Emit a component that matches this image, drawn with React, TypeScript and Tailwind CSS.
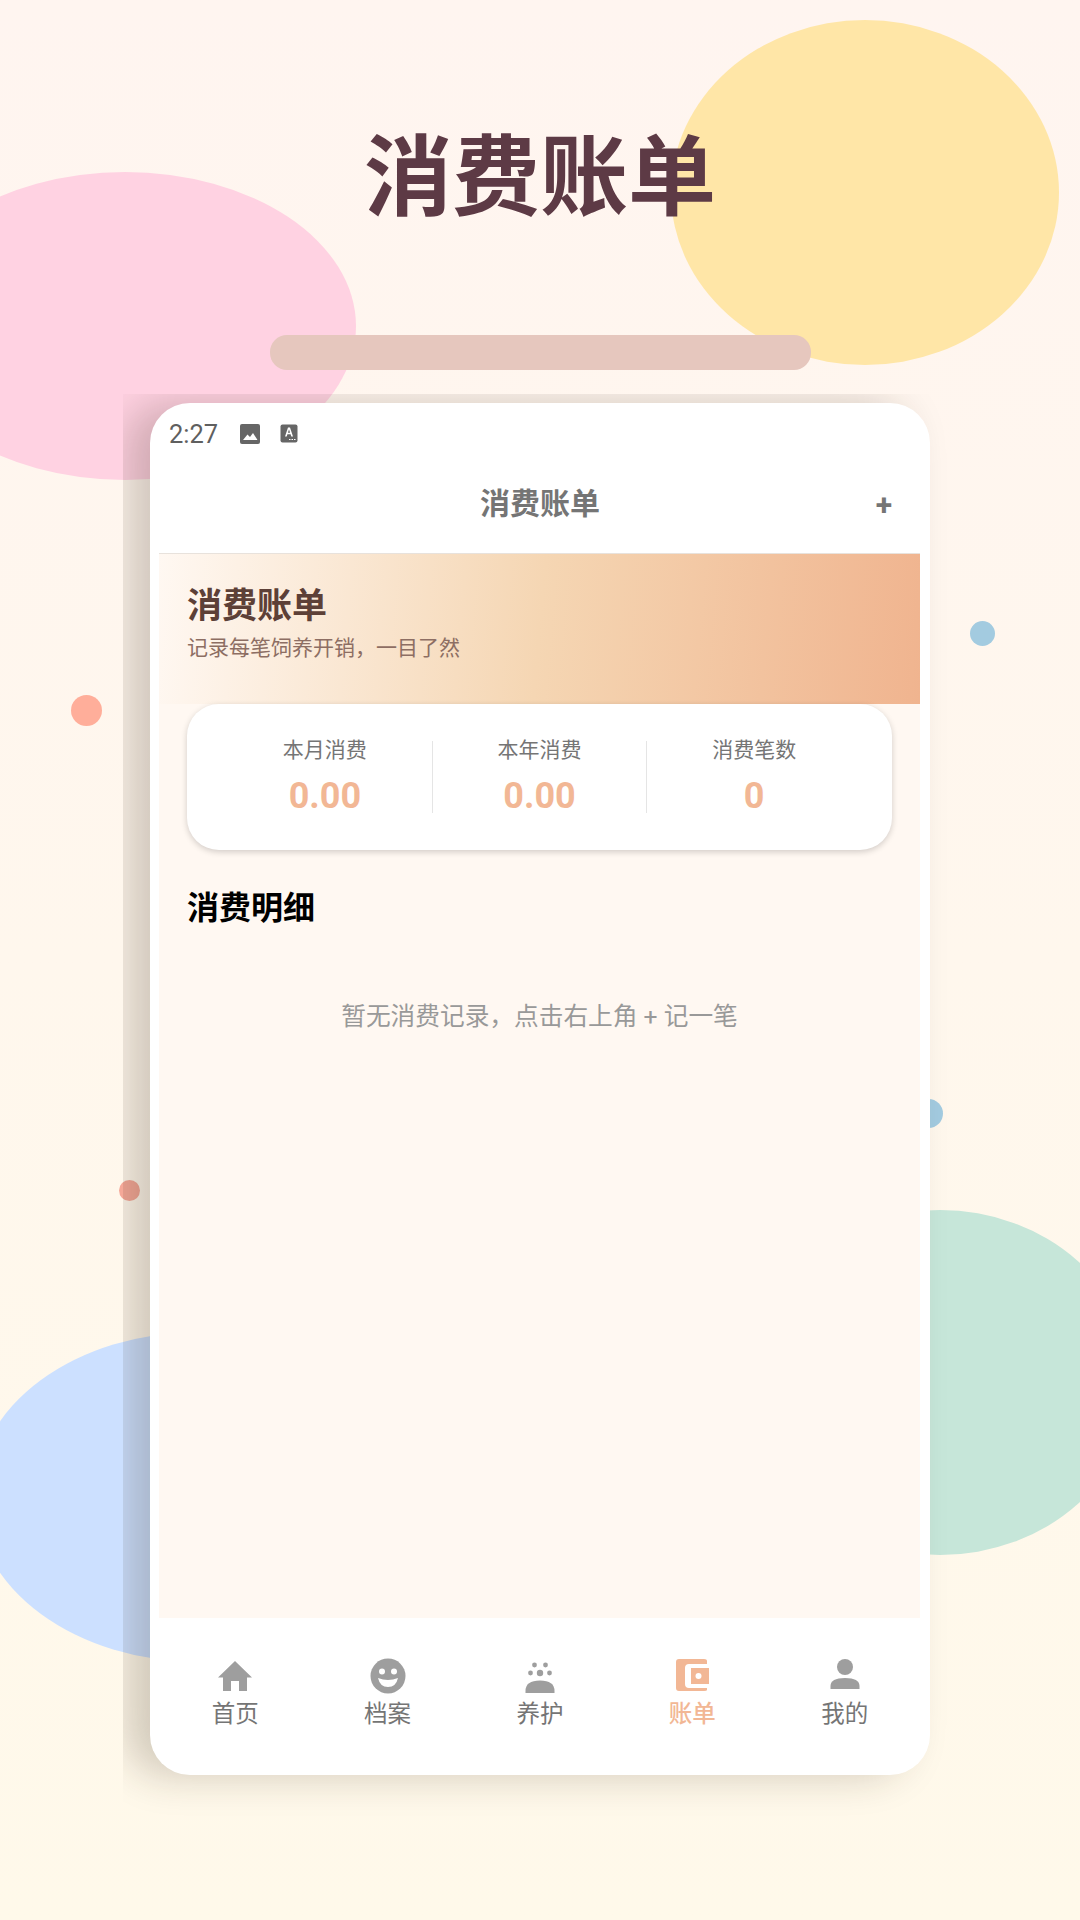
import React from 'react';

const CJK = "font-['Roboto','Noto_Sans_CJK_SC',sans-serif]";

const HomeIcon = () => (
  <svg width="36" height="32" viewBox="0 0 36 32" fill="#9e9e9e">
    <path d="M18 1 L35 17.5 L30 17.5 L30 31 L22 31 L22 21 L14 21 L14 31 L6 31 L6 17.5 L1 17.5 Z" />
  </svg>
);

const SmileIcon = () => (
  <svg width="36" height="36" viewBox="0 0 36 36">
    <circle cx="18" cy="18" r="17.5" fill="#9e9e9e" />
    <circle cx="12" cy="13.5" r="3" fill="#fff" />
    <circle cx="24" cy="13.5" r="3" fill="#fff" />
    <path d="M8 20 Q18 24 28 20 Q26 29 18 29 Q10 29 8 20 Z" fill="#fff" />
  </svg>
);

const CareIcon = () => (
  <svg width="36" height="36" viewBox="0 0 36 36" fill="#9e9e9e">
    <circle cx="12.500" cy="7" r="2.400" />
    <circle cx="23.500" cy="7" r="2.400" />
    <circle cx="8.500" cy="15" r="2.400" />
    <circle cx="18" cy="15" r="3.200" />
    <circle cx="27.500" cy="15" r="2.400" />
    <path d="M3.500 35 V33 Q3.500 22.500 18 22.500 Q32.500 22.500 32.500 33 V35 Z" />
  </svg>
);

const WalletIcon = () => (
  <svg width="36" height="36" viewBox="0 0 36 36">
    <path d="M5 1 H30 Q33 1 33 3 V6 H15 Q11 6 11 10 V26 Q11 30 15 30 H33 V32 Q33 33 30 33 H5 Q2 33 2 30 V4 Q2 1 5 1 Z" fill="#f2b795" />
    <path d="M17 10 H35 V26 H17 Z" fill="#f2b795" />
    <circle cx="24.500" cy="18" r="3" fill="#fff" />
  </svg>
);

const PersonIcon = () => (
  <svg width="36" height="36" viewBox="0 0 36 36" fill="#9e9e9e">
    <circle cx="18" cy="9" r="8" />
    <path d="M3.500 31 V28 Q3.500 20 18 20 Q32.500 20 32.500 28 V31 Z" />
  </svg>
);

const tabs = [
  { label: '首页', icon: <HomeIcon /> },
  { label: '档案', icon: <SmileIcon /> },
  { label: '养护', icon: <CareIcon /> },
  { label: '账单', icon: <WalletIcon />, active: true },
  { label: '我的', icon: <PersonIcon /> },
];

const stats = [
  { label: '本月消费', value: '0.00' },
  { label: '本年消费', value: '0.00' },
  { label: '消费笔数', value: '0' },
];

export default function App() {
  return (
    <div className={`relative w-[1080px] h-[1920px] overflow-hidden bg-gradient-to-b from-[#fff5f0] to-[#fff9ea] ${CJK}`}>
      {/* background blobs */}
      <div className="absolute left-[671px] top-[20px] w-[388px] h-[345px] rounded-[50%] bg-[#ffe6a7]" />
      <div className="absolute left-[-106px] top-[172px] w-[462px] h-[308px] rounded-[50%] bg-[#ffd2e2]" />
      <div className="absolute left-[-25px] top-[1332px] w-[448px] h-[330px] rounded-[50%] bg-[#cce0ff]" />
      <div className="absolute left-[746px] top-[1210px] w-[388px] h-[345px] rounded-[50%] bg-[#c6e6d9]" />
      <div className="absolute left-[71px] top-[695px] w-[31px] h-[31px] rounded-full bg-[#ffae9a]" />
      <div className="absolute left-[970px] top-[621px] w-[25px] h-[25px] rounded-full bg-[#a3cbe0]" />
      <div className="absolute left-[914px] top-[1099px] w-[29px] h-[29px] rounded-full bg-[#a3cbe0]" />
      <div className="absolute left-[119px] top-[1180px] w-[21px] h-[21px] rounded-full bg-[#f5a898]" />

      <div className="relative flex flex-col items-center h-full">
        <h1 className="mt-[122px] h-[112px] leading-[112px] text-[88px] font-bold text-[#5d3a45]">消费账单</h1>
        <div className="mt-[101px] w-[541px] h-[35px] rounded-[17px] bg-[#e6c7be]" />

        {/* the card shadow is cut off at this box's left and top edges */}
        <div className="mt-[24px] self-stretch ml-[123px] flex-1 overflow-hidden pl-[27px] pt-[9px]">
          <div className="w-[780px] h-[1372px] rounded-[40px] bg-white overflow-hidden flex flex-col shadow-[-24px_0_40px_rgba(50,35,20,0.22)]">
            <div className="h-[60px] flex items-center pl-[19px] pt-[2px] text-[#5f5f5f]">
              <span className="text-[25.500px] font-['Roboto'] w-[69px]">2:27</span>
              <svg width="22" height="22" viewBox="0 0 22 22" className="ml-[1px] -mt-[1px]">
                <rect x="1" y="1" width="20" height="20" rx="2" fill="#666" />
                <path d="M4 17 L8.500 11.500 L11 14 L14 10 L18.500 17 Z" fill="#fff" />
              </svg>
              <svg width="18" height="19" viewBox="0 0 18 19" className="ml-[19px] -mt-[1px]">
                <rect x="0.500" y="0.500" width="17" height="18" rx="2" fill="#666" />
                <path d="M8 3.500 H10 L13 12.500 H11.300 L10.600 10.300 H7.400 L6.700 12.500 H5 Z M7.900 8.800 H10.100 L9 5.500 Z" fill="#fff" />
                <path d="M9 15 H10.500 V16 H9 Z M11.500 15 H13 V16 H11.500 Z M14 15 H15.500 V16 H14 Z" fill="#fff" />
              </svg>
            </div>

            <div className="h-[90px] relative flex items-center justify-center pb-[10px]">
              <span className="text-[30px] font-bold text-[#757575]">消费账单</span>
              <span className="absolute right-[38px] top-[25px] text-[30px] leading-[34px] font-bold text-[#757575] font-['Roboto']">+</span>
            </div>

            <div className="flex-1 ml-[9px] mr-[10px] bg-[#fff8f2] flex flex-col">
              <div className="h-[151px] px-[28px] pt-[30px] border-t border-[#e8e2dc] bg-[linear-gradient(95deg,#fff8f2_0%,#f5d6b3_50%,#f0b48f_100%)]">
                <div className="text-[35px] leading-[46px] font-bold text-[#5d4037]">消费账单</div>
                <div className="text-[21px] leading-[32px] mt-[2px] text-[#8d6e63]">记录每笔饲养开销，一目了然</div>
              </div>

              <div className="mx-[28px] h-[146px] rounded-[32px] bg-white shadow-[0_2px_6px_rgba(0,0,0,0.18)] px-[31px] flex items-center">
                {stats.map((s, i) => (
                  <div
                    key={s.label}
                    className={`flex-1 h-[72px] flex flex-col items-center ${i < 2 ? 'border-r border-[#e5e5e5]' : ''}`}
                  >
                    <span className="text-[21px] leading-[26px] -mt-[4px] text-[#757575]">{s.label}</span>
                    <span className="text-[36px] leading-[44px] mt-[11px] font-bold text-[#f2b795] font-['Roboto']">{s.value}</span>
                  </div>
                ))}
              </div>

              <div className="mt-[36px] px-[28px] text-[32px] leading-[44px] font-bold text-black">消费明细</div>
              <div className="mt-[69px] text-center text-[24.700px] leading-[36px] text-[#999999]">暂无消费记录，点击右上角 + 记一笔</div>
            </div>

            <div className="h-[157px] flex px-[9px] pt-[40px]">
              {tabs.map((t) => (
                <div key={t.label} className="w-[152.400px] flex flex-col items-center">
                  <div className="h-[36px] flex items-center justify-center">{t.icon}</div>
                  <span className={`text-[23.500px] leading-[32px] mt-[4px] ${t.active ? 'text-[#f2b795] font-medium' : 'text-[#757575]'}`}>{t.label}</span>
                </div>
              ))}
            </div>
          </div>
        </div>
      </div>
    </div>
  );
}
